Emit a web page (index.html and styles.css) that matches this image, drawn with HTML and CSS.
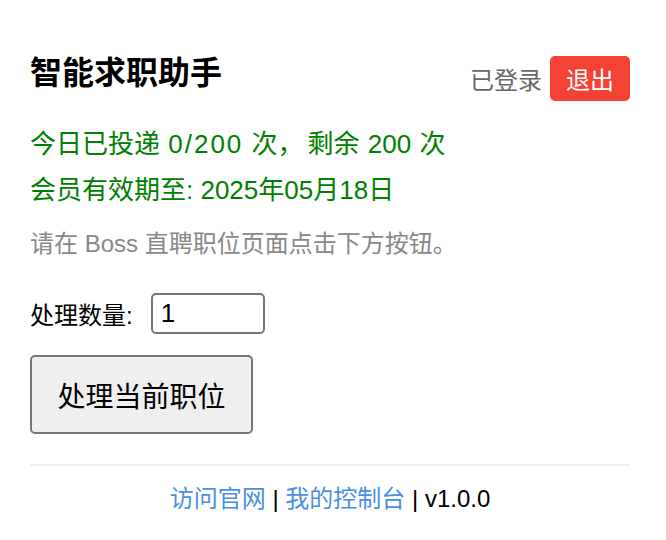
FILE: index.html
```html
<!DOCTYPE html>
<html lang="zh-CN">
<head>
<meta charset="utf-8">
<title>智能求职助手</title>
<link rel="stylesheet" href="styles.css">
</head>
<body>
<div class="popup">
  <header class="header">
    <h1 class="title">智能求职助手</h1>
    <div class="user">
      <span class="status">已登录</span>
      <button class="logout">退出</button>
    </div>
  </header>
  <p class="green first">今日已投递 <span class="count">0/200</span> 次<span class="comma">，</span>剩余 200 次</p>
  <p class="green">会员有效期至: 2025年05月18日</p>
  <p class="hint">请在 Boss 直聘职位页面点击下方按钮。</p>
  <div class="field">
    <label class="label" for="count">处理数量:</label>
    <input class="input" id="count" type="text" value="1">
  </div>
  <button class="process">处理当前职位</button>
  <hr class="divider">
  <footer class="footer">
    <a class="link" href="#">访问官网</a> | <a class="link" href="#">我的控制台</a> | v1.0.0
  </footer>
</div>
</body>
</html>
```
FILE: styles.css
```css
html, body {
  margin: 0;
  padding: 0;
  background: #fff;
}
body {
  font-family: "Liberation Sans", "Noto Sans CJK SC", sans-serif;
  color: #000;
}
.popup {
  padding: 56px 36px 0 30px;
}
.header {
  display: flex;
  justify-content: space-between;
  align-items: flex-start;
}
.title {
  margin: 0;
  font-size: 32px;
  font-weight: bold;
  line-height: 34px;
}
.user {
  display: flex;
  align-items: center;
  gap: 8px;
}
.status {
  color: #666;
  font-size: 24px;
}
.logout {
  background: #f44336;
  color: #fff;
  border: none;
  border-radius: 5px;
  font-family: inherit;
  font-size: 24px;
  width: 80px;
  height: 45px;
  padding: 0;
}
.green {
  color: #008000;
  font-size: 26px;
  margin: 0;
  line-height: 46px;
}
.first {
  margin-top: 20px;
  word-spacing: 1px;
}
.count {
  letter-spacing: 2px;
}
.comma {
  margin-right: 4px;
}
.hint {
  color: #888;
  font-size: 24px;
  margin: 14px 0 0;
  line-height: 34px;
}
.field {
  display: flex;
  align-items: center;
  gap: 18px;
  margin-top: 32px;
}
.label {
  font-size: 24px;
}
.input {
  width: 114px;
  height: 41px;
  box-sizing: border-box;
  border: 2px solid #767676;
  border-radius: 5px;
  font-family: inherit;
  font-size: 26px;
  padding: 0 8px;
  color: #000;
}
.process {
  display: block;
  margin-top: 21px;
  width: 223px;
  height: 79px;
  box-sizing: border-box;
  background: #efefef;
  border: 2px solid #767676;
  border-radius: 5px;
  font-family: inherit;
  font-size: 28px;
  color: #000;
  padding: 0;
}
.divider {
  border: none;
  border-top: 2px solid #eee;
  margin: 30px 0 0;
}
.footer {
  text-align: center;
  font-size: 24px;
  margin-top: 16px;
  line-height: 34px;
}
.link {
  color: #4a90e2;
  text-decoration: none;
}
```
